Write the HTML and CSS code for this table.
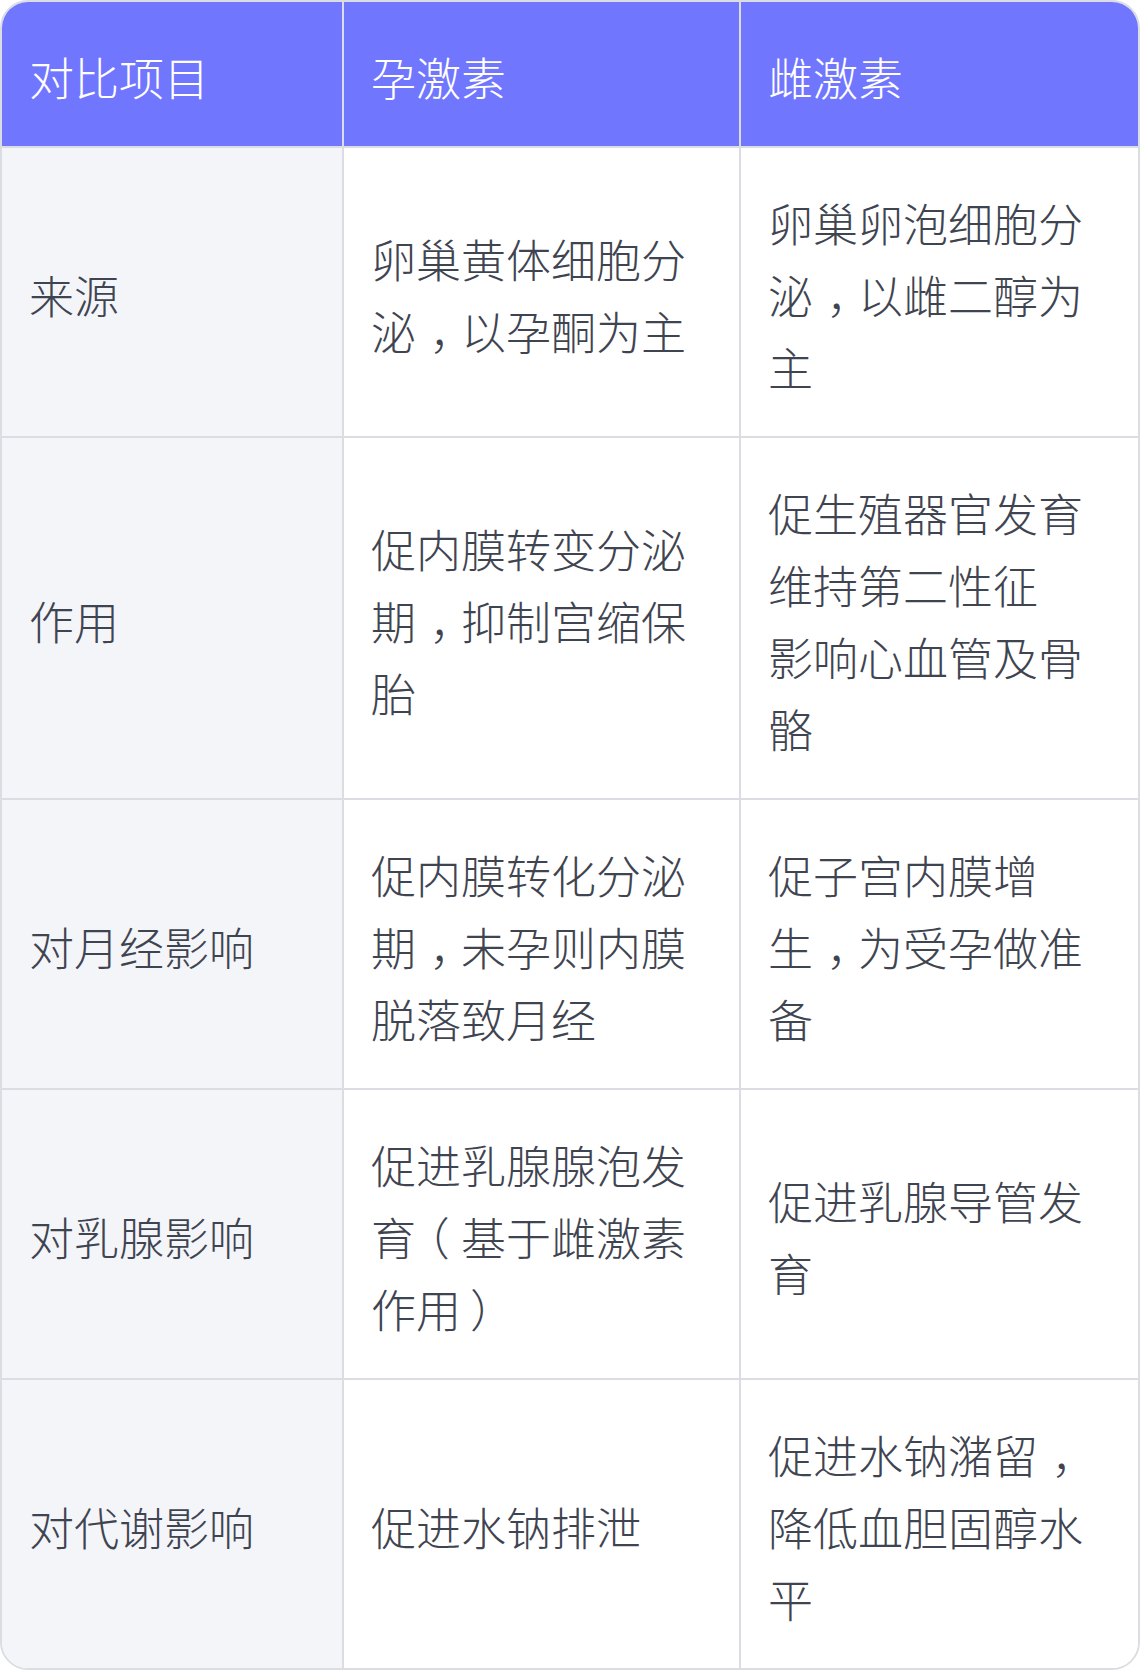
FILE: index.html
```html
<!DOCTYPE html>
<html lang="zh-CN">
<head>
<meta charset="utf-8">
<title>孕激素与雌激素对比</title>
<link rel="stylesheet" href="styles.css">
</head>
<body>
<div class="table-wrap">
  <table class="compare">
    <colgroup>
      <col class="c1">
      <col class="c2">
      <col class="c3">
    </colgroup>
    <thead>
      <tr>
        <th>对比项目</th>
        <th>孕激素</th>
        <th>雌激素</th>
      </tr>
    </thead>
    <tbody>
      <tr>
        <td class="label">来源</td>
        <td>卵巢黄体细胞分泌<span class="p-comma">，</span>以孕酮为主</td>
        <td>卵巢卵泡细胞分泌<span class="p-comma">，</span>以雌二醇为主</td>
      </tr>
      <tr>
        <td class="label">作用</td>
        <td>促内膜转变分泌期<span class="p-comma">，</span>抑制宫缩保胎</td>
        <td>促生殖器官发育<br>维持第二性征<br>影响心血管及骨骼</td>
      </tr>
      <tr>
        <td class="label">对月经影响</td>
        <td>促内膜转化分泌期<span class="p-comma">，</span>未孕则内膜脱落致月经</td>
        <td>促子宫内膜增生<span class="p-comma">，</span>为受孕做准备</td>
      </tr>
      <tr>
        <td class="label">对乳腺影响</td>
        <td>促进乳腺腺泡发育<span class="p-open">（</span>基于雌激素作用<span class="p-close">）</span></td>
        <td>促进乳腺导管发育</td>
      </tr>
      <tr>
        <td class="label">对代谢影响</td>
        <td>促进水钠排泄</td>
        <td>促进水钠潴留<span class="p-comma">，</span>降低血胆固醇水平</td>
      </tr>
    </tbody>
  </table>
</div>
</body>
</html>
```

FILE: styles.css
```css
html, body {
  margin: 0;
  padding: 0;
  background: #ffffff;
}

body {
  font-family: "Noto Sans CJK SC", "Noto Sans", sans-serif;
  color: #3f4451;
}

.table-wrap {
  width: 1140px;
  box-sizing: border-box;
  border: 2px solid #dcdde2;
  border-radius: 28px;
  overflow: hidden;
}

.compare {
  width: 100%;
  border-collapse: separate;
  border-spacing: 0;
  table-layout: fixed;
}

.c1 { width: 342px; }
.c2 { width: 397px; }
.c3 { width: 397px; }

.compare th,
.compare td {
  padding: 39px 27px 33px;
  font-size: 45px;
  line-height: 72px;
  font-weight: 300;
  text-align: left;
  vertical-align: middle;
  border-right: 2px solid #dcdde2;
  border-bottom: 2px solid #dcdde2;
  word-break: break-all;
}

.compare th:last-child,
.compare td:last-child {
  border-right: none;
}

.compare tbody tr:last-child td {
  border-bottom: none;
}

.compare th {
  background: #7176ff;
  color: #ffffff;
}

.compare td {
  background: #ffffff;
}

.compare td.label {
  background: #f4f5f9;
}

/* centred full-width punctuation, as in the reference */
.p-comma {
  padding-left: 0.3em;
  margin-right: -0.3em;
}

.p-open {
  margin-left: -0.25em;
  padding-right: 0.25em;
}

.p-close {
  padding-left: 0.2em;
  margin-right: -0.2em;
}
```
